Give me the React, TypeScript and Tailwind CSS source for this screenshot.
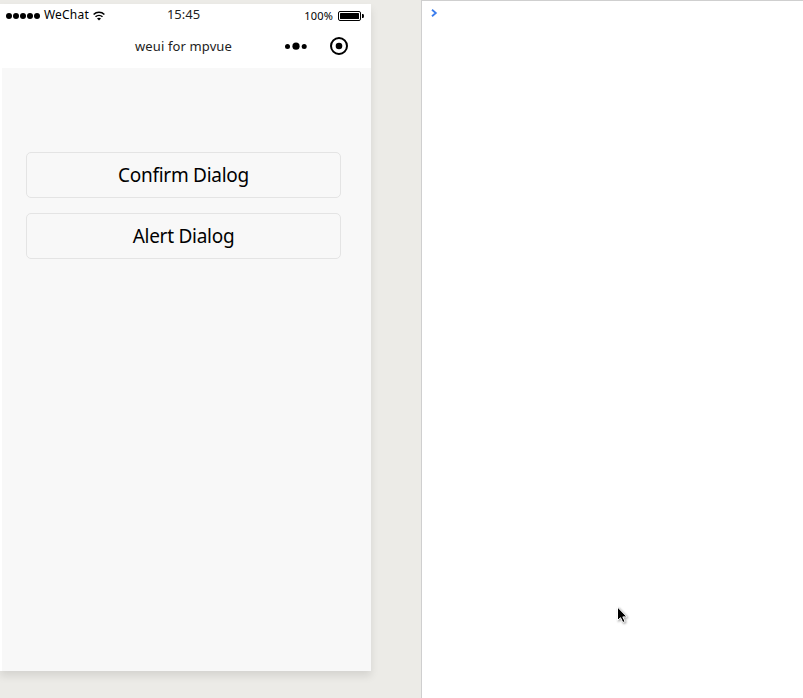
function StatusBar() {
  return (
    <div className="grid h-[22px] grid-cols-[1fr_auto_1fr] items-center pl-1.5 pr-[7px] leading-none">
      <div className="flex items-center">
        <div className="mt-0.5 flex gap-px">
          {[0, 1, 2, 3, 4].map((i) => (
            <span key={i} className="size-[6px] rounded-full bg-black" />
          ))}
        </div>
        <span className="ml-1 text-[12px] tracking-[0.2px]">WeChat</span>
        <svg className="ml-[4px] mt-0.5" width="12" height="10" viewBox="0 0 12 10" fill="none" stroke="#000" strokeWidth="1.5">
          <path d="M0.6 3.5C3.6 0.5 8.4 0.5 11.4 3.5" />
          <path d="M2.5 5.8C4.5 3.9 7.5 3.9 9.5 5.8" />
          <path d="M4 7.5C5.2 6.5 6.8 6.5 8 7.5L6 9.6Z" fill="#000" stroke="none" />
        </svg>
      </div>
      <span className="mr-[3px] -mt-0.5 text-[13px] text-[#222]">15:45</span>
      <div className="flex items-center justify-end pt-0.5">
        <span className="-mt-px text-[11px] tracking-[0.2px]">100%</span>
        <svg className="ml-[5px]" width="26" height="10" viewBox="0 0 26 10">
          <rect x="0.5" y="0.5" width="22" height="9" rx="1.5" fill="none" stroke="#000" />
          <rect x="2" y="2" width="19" height="6" rx="0.5" />
          <path d="M24 3h1q1 0 1 2t-1 2h-1z" />
        </svg>
      </div>
    </div>
  );
}

function NavigationBar() {
  return (
    <div className="grid h-[42px] grid-cols-[1fr_auto_1fr] items-center pr-[23px]">
      <span />
      <span className="pl-[19px] text-[13px] tracking-[0.12px] text-[#222]">weui for mpvue</span>
      <div className="flex items-center justify-end gap-[22px] pb-0.5">
        <svg width="24" height="8" viewBox="0 0 24 8">
          <circle cx="3.5" cy="4.5" r="2.5" />
          <circle cx="12" cy="4.2" r="3.6" />
          <circle cx="20.2" cy="4.5" r="2.5" />
        </svg>
        <svg width="18" height="18" viewBox="0 0 18 18">
          <circle cx="9" cy="9" r="8" fill="none" stroke="#000" strokeWidth="2" />
          <circle cx="9" cy="9" r="3.3" />
        </svg>
      </div>
    </div>
  );
}

function DialogButton({ label }: { label: string }) {
  return (
    <button className="flex h-[46px] w-full items-center justify-center rounded-[5px] border border-[#e4e4e4] bg-[#f8f8f8] pt-px text-[19px] leading-none tracking-[-0.27px] text-black">
      {label}
    </button>
  );
}

export default function App() {
  return (
    <div className="relative flex h-[698px] w-[803px] overflow-hidden bg-[#ecebe7] font-['Noto_Sans','Open_Sans',sans-serif] text-black">
      <div className="w-[421px] pt-1">
        <main className="h-[667px] w-[371px] bg-white shadow-[0_5px_8px_rgba(0,0,0,0.1)]">
          <StatusBar />
          <NavigationBar />
          <section className="ml-0.5 flex h-[603px] flex-col gap-[15px] bg-[#f8f8f8] pl-6 pr-[30px] pt-[84px]">
            <DialogButton label="Confirm Dialog" />
            <DialogButton label="Alert Dialog" />
          </section>
        </main>
      </div>
      <aside className="flex-1 border-l border-t border-[#cfcfcf] bg-white pl-[9px] pt-2">
        <svg width="7" height="8" viewBox="0 0 7 8" fill="none" stroke="#3b7ded" strokeWidth="1.8">
          <path d="M1 0.8L4.8 4L1 7.2" />
        </svg>
      </aside>
      <svg className="absolute left-[616px] top-[606px] drop-shadow-[1px_1px_1px_rgba(0,0,0,0.4)]" width="13" height="20" viewBox="0 0 13 20">
        <path d="M1.5 1V14.5L4.5 11.7L6.8 16.5L9.1 15.5L6.8 10.9H11Z" stroke="#fff" strokeWidth="1" />
      </svg>
    </div>
  );
}
